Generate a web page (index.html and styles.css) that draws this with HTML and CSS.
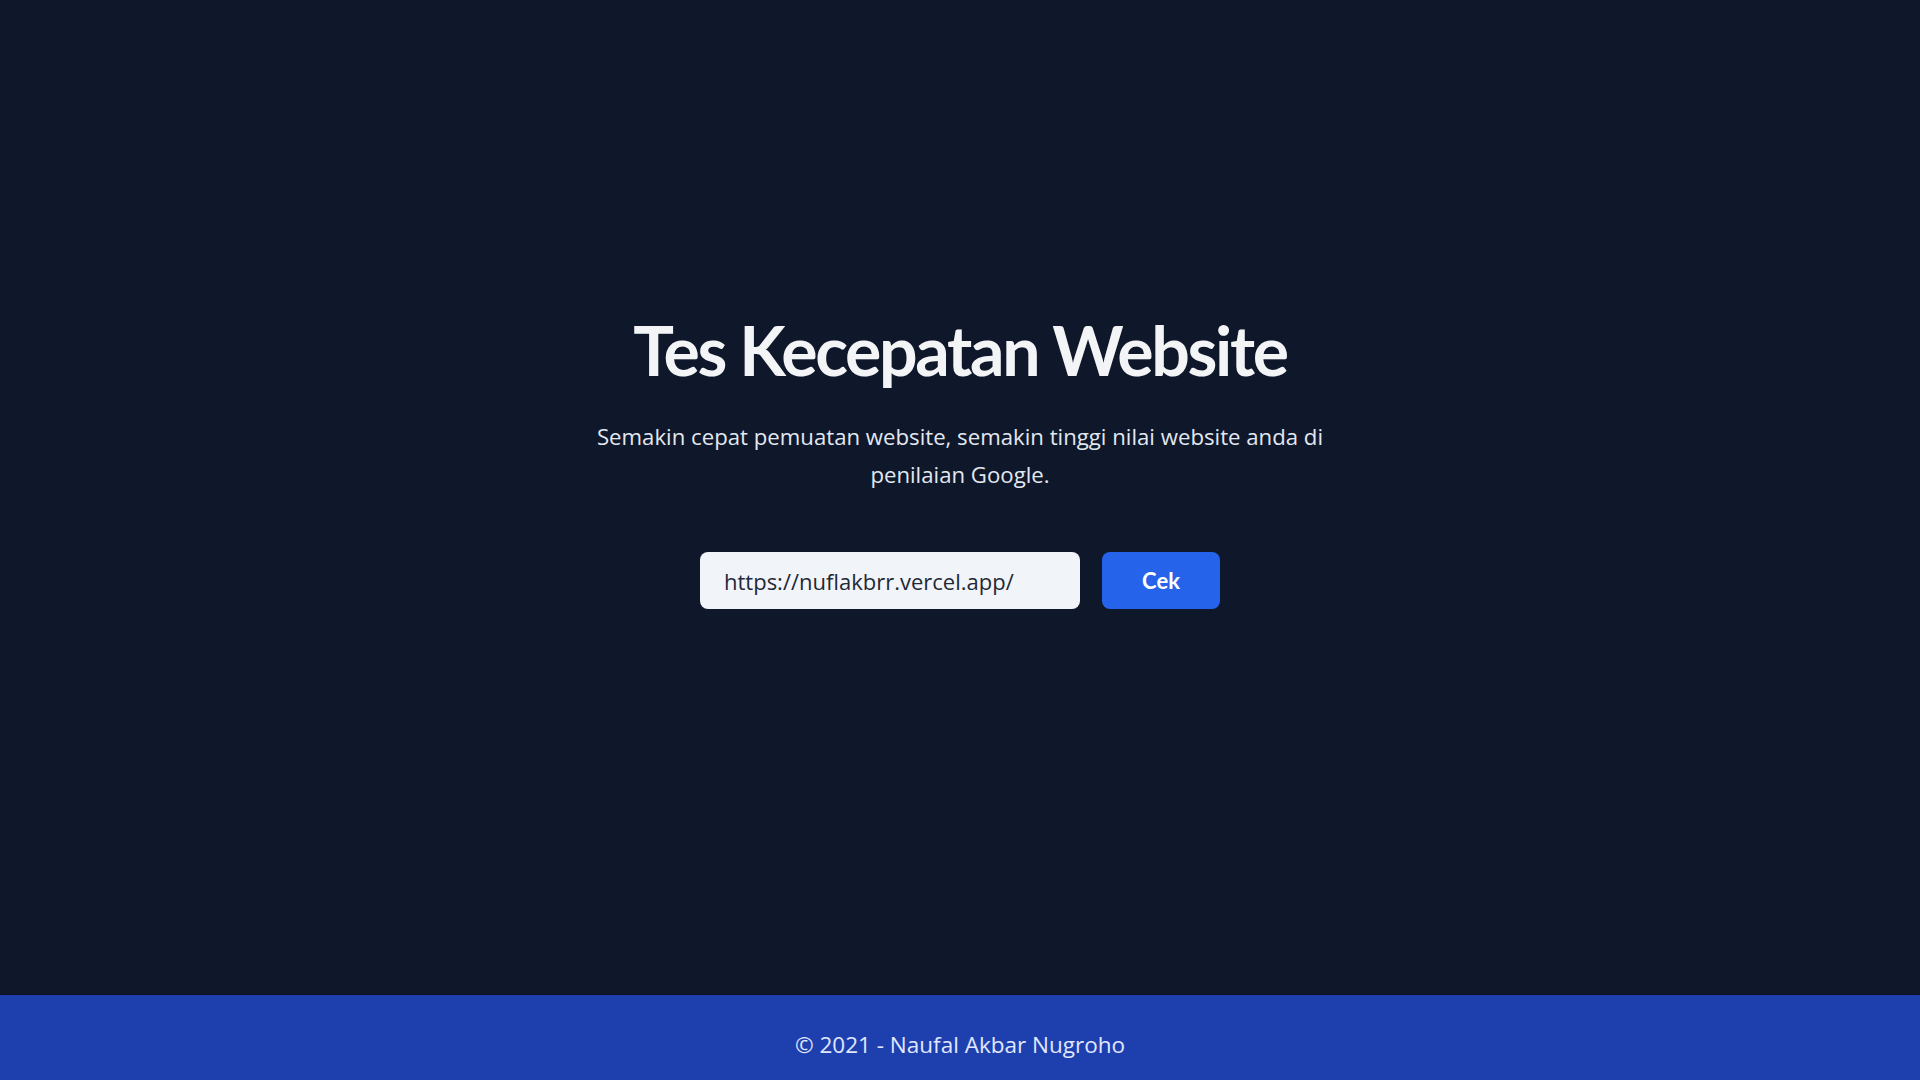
FILE: index.html
```html
<!DOCTYPE html>
<html lang="id">
<head>
<meta charset="utf-8">
<title>Tes Kecepatan Website</title>
<link rel="stylesheet" href="styles.css">
</head>
<body>
<div class="page">
  <main class="main">
    <h1 class="title">Tes Kecepatan Website</h1>
    <p class="subtitle">Semakin cepat pemuatan website, semakin tinggi nilai website anda di penilaian Google.</p>
    <form class="form">
      <input class="url" type="text" value="https://nuflakbrr.vercel.app/">
      <button class="btn" type="button">Cek</button>
    </form>
  </main>
  <footer class="footer">© 2021 - Naufal Akbar Nugroho</footer>
</div>
</body>
</html>
```

FILE: styles.css
```css
html, body {
  margin: 0;
  padding: 0;
}
body {
  background: #0f172a;
  font-family: "Open Sans", "Lato", sans-serif;
  color: #f1f5f9;
}
.page {
  min-height: 1080px;
  display: flex;
  flex-direction: column;
}
.main {
  flex: 1;
  display: flex;
  flex-direction: column;
  align-items: center;
  padding-top: 314px;
}
.title {
  margin: 0;
  font-family: "Lato", "Open Sans", sans-serif;
  font-size: 68px;
  line-height: 72px;
  font-weight: 700;
  color: #f3f4f6;
  letter-spacing: -2.3px;
}
.subtitle {
  margin: 32px 0 0;
  max-width: 770px;
  text-align: center;
  font-size: 22.2px;
  line-height: 38px;
  color: #e2e8f0;
}
.form {
  margin-top: 58px;
  display: flex;
  gap: 22px;
}
.url {
  width: 380px;
  height: 57px;
  box-sizing: border-box;
  border: none;
  border-radius: 8px;
  background: #f1f5f9;
  padding: 0 24px;
  font-family: inherit;
  font-size: 22px;
  color: #1f2937;
  outline: none;
}
.btn {
  width: 118px;
  height: 57px;
  border: none;
  border-radius: 8px;
  background: #2563eb;
  color: #ffffff;
  font-family: "Lato", "Open Sans", sans-serif;
  font-size: 22px;
  font-weight: 700;
}
.footer {
  height: 86px;
  box-sizing: border-box;
  padding-top: 14px;
  background: #1e40af;
  border-top: 1px solid #0b1020;
  display: flex;
  align-items: center;
  justify-content: center;
  font-size: 22.5px;
  color: #e0e7ff;
}
```
